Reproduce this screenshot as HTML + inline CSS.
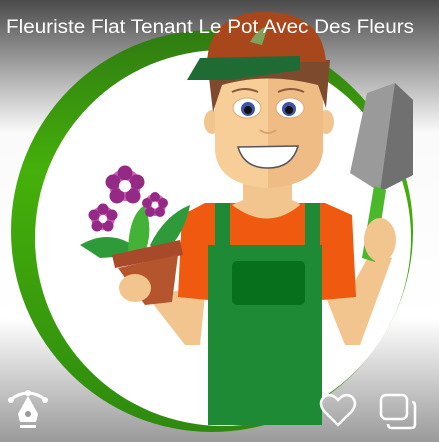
<!DOCTYPE html>
<html><head><meta charset="utf-8"><style>
html,body{margin:0;padding:0;width:439px;height:442px;overflow:hidden;background:#fff}
svg{display:block}
</style></head><body>
<svg width="439" height="442" viewBox="0 0 439 442" xmlns="http://www.w3.org/2000/svg">
<defs>
<linearGradient id="bg" x1="0" y1="0" x2="0" y2="1">
<stop offset="0" stop-color="#4a4a4a"/>
<stop offset="0.3" stop-color="#fafafa"/>
<stop offset="0.72" stop-color="#ffffff"/>
<stop offset="1" stop-color="#9a9a9a"/>
</linearGradient>
<linearGradient id="ring" x1="0" y1="0" x2="0" y2="1">
<stop offset="0" stop-color="#2f7a12"/>
<stop offset="0.35" stop-color="#45b00a"/>
<stop offset="1" stop-color="#2e8a0e"/>
</linearGradient>
</defs>
<rect width="439" height="442" fill="url(#bg)"/>
<circle cx="212" cy="231" r="201" fill="url(#ring)"/>
<circle cx="223" cy="238" r="188" fill="#fff"/>
<!-- arms -->
<path d="M180 290 L205 295 L200 345 L185 345 L150 300 L140 300 Z" fill="#f2c48e"/>
<path d="M325 295 L350 290 L372 250 L392 258 L360 345 L345 345 Z" fill="#f2c48e"/>
<!-- shirt -->
<path d="M205 203 L325 203 L352 215 L356 297 L322 300 L208 300 L178 297 L182 215 Z" fill="#ef5a10"/>
<path d="M243 175 L292 175 L292 200 Q300 203 300 205 Q268 232 232 205 Q238 202 243 200 Z" fill="#f2c48e"/>
<!-- overalls -->
<rect x="215" y="203" width="15" height="45" fill="#1f8a35"/>
<rect x="305" y="203" width="15" height="45" fill="#1f8a35"/>
<rect x="208" y="245" width="114" height="180" fill="#1f8a35"/>
<rect x="232" y="261" width="73" height="44" rx="5" fill="#06701c"/>
<!-- face -->
<ellipse cx="212" cy="122" rx="8" ry="12" fill="#f2c48e"/>
<ellipse cx="326" cy="122" rx="8" ry="12" fill="#f2c48e"/>
<path d="M215 70 L323 70 L323 150 Q320 185 268 188 Q217 185 215 150 Z" fill="#f7cd98"/>
<path d="M268 70 L323 70 L323 150 Q320 185 268 188 Z" fill="#eebc84"/>
<path d="M207 60 L330 60 L326 108 L318 85 Q268 72 222 85 L213 112 Z" fill="#7d4a2e"/>
<!-- cap -->
<path d="M207 62 Q210 12 265 12 Q322 12 326 62 Z" fill="#a8461c"/>
<path d="M250 42 Q258 28 268 26 L262 45 Z" fill="#7fa35a"/>
<path d="M187 80 L200 58 L300 56 L300 70 L230 80 Z" fill="#1e6b34"/>
<path d="M232 92 Q245 86 258 92" stroke="#8a5a3a" stroke-width="2" fill="none"/>
<path d="M278 92 Q291 86 304 92" stroke="#8a5a3a" stroke-width="2" fill="none"/>
<ellipse cx="247" cy="108" rx="14" ry="10" fill="#fff" stroke="#e0a878" stroke-width="1"/>
<ellipse cx="290" cy="108" rx="14" ry="10" fill="#fff" stroke="#e0a878" stroke-width="1"/>
<circle cx="248" cy="109" r="7" fill="#3d55a8"/>
<circle cx="289" cy="109" r="7" fill="#3d55a8"/>
<circle cx="248" cy="110" r="4" fill="#111"/>
<circle cx="289" cy="110" r="4" fill="#111"/>
<path d="M260 130 Q268 136 276 130" stroke="#d9a070" stroke-width="2" fill="none"/>
<path d="M238 147 L298 146 Q292 168 268 168 Q244 168 238 147 Z" fill="#fff" stroke="#555" stroke-width="1.5"/>
<!-- trowel -->
<path d="M367 93 L395 83 L413 100 L413 175 L380 192 L350 173 Z" fill="#9a9a9a"/>
<path d="M395 83 L413 100 L413 175 L380 192 Z" fill="#707070"/>
<path d="M374 186 L386 190 L375 262 L362 258 Z" fill="#4ab82a"/>
<ellipse cx="380" cy="240" rx="16" ry="22" fill="#f2c48e"/>
<!-- plant -->
<path d="M80 245 Q115 225 145 255 L100 258 Z" fill="#2e9a3a"/>
<path d="M150 245 Q165 215 190 205 Q185 235 160 258 Z" fill="#2e9a3a"/>
<path d="M128 255 Q128 215 145 205 Q155 235 142 258 Z" fill="#44b236"/>
<path d="M112 255 L180 240 L183 255 L115 268 Z" fill="#a84a2a"/>
<path d="M118 268 L178 255 L172 302 L145 305 Z" fill="#b5552e"/>
<ellipse cx="135" cy="288" rx="16" ry="14" fill="#f2c48e"/>
<g fill="#d060b8">
<circle cx="125" cy="185" r="16"/><circle cx="103" cy="218" r="12"/><circle cx="155" cy="205" r="11"/>
</g>
<g fill="#952a86">
<circle cx="125" cy="173" r="7.5"/><circle cx="137" cy="182" r="7.5"/><circle cx="133" cy="196" r="7.5"/><circle cx="117" cy="196" r="7.5"/><circle cx="113" cy="182" r="7.5"/>
<circle cx="103" cy="209" r="5.5"/><circle cx="112" cy="215" r="5.5"/><circle cx="108" cy="226" r="5.5"/><circle cx="97" cy="226" r="5.5"/><circle cx="94" cy="215" r="5.5"/>
<circle cx="155" cy="197" r="5"/><circle cx="163" cy="203" r="5"/><circle cx="160" cy="212" r="5"/><circle cx="150" cy="212" r="5"/><circle cx="147" cy="203" r="5"/>
</g>
<circle cx="125" cy="186" r="6" fill="#fff"/>
<circle cx="103" cy="219" r="4" fill="#fff"/>
<circle cx="155" cy="205" r="3.5" fill="#fff"/>
<text x="6" y="33" fill="#fff" font-family="Liberation Sans, sans-serif" font-size="19" textLength="408" lengthAdjust="spacingAndGlyphs">Fleuriste Flat Tenant Le Pot Avec Des Fleurs</text>
<g fill="#fff">
<path d="M10 400 Q28 386 46 400" stroke="#fff" stroke-width="3" fill="none"/>
<circle cx="11" cy="400" r="3"/><circle cx="45" cy="400" r="3"/><circle cx="28" cy="393" r="3"/>
<path d="M28 396 L38 414 L36 422 L20 422 L18 414 Z"/>
<rect x="20" y="425" width="16" height="3"/>
</g>
<circle cx="28" cy="414" r="3" fill="#999"/>
<path d="M338 425 L324 411 Q318 403 324 397 Q331 392 338 400 Q345 392 352 397 Q358 403 352 411 Z" stroke="#fff" stroke-width="2.5" fill="none"/>
<rect x="381" y="395" width="26" height="24" rx="5" stroke="#fff" stroke-width="2.5" fill="none"/>
<path d="M412 402 Q415 402 415 406 L415 424 Q415 428 411 428 L392 428 Q388 428 388 424" stroke="#fff" stroke-width="2.5" fill="none"/>
</svg>
</body></html>
